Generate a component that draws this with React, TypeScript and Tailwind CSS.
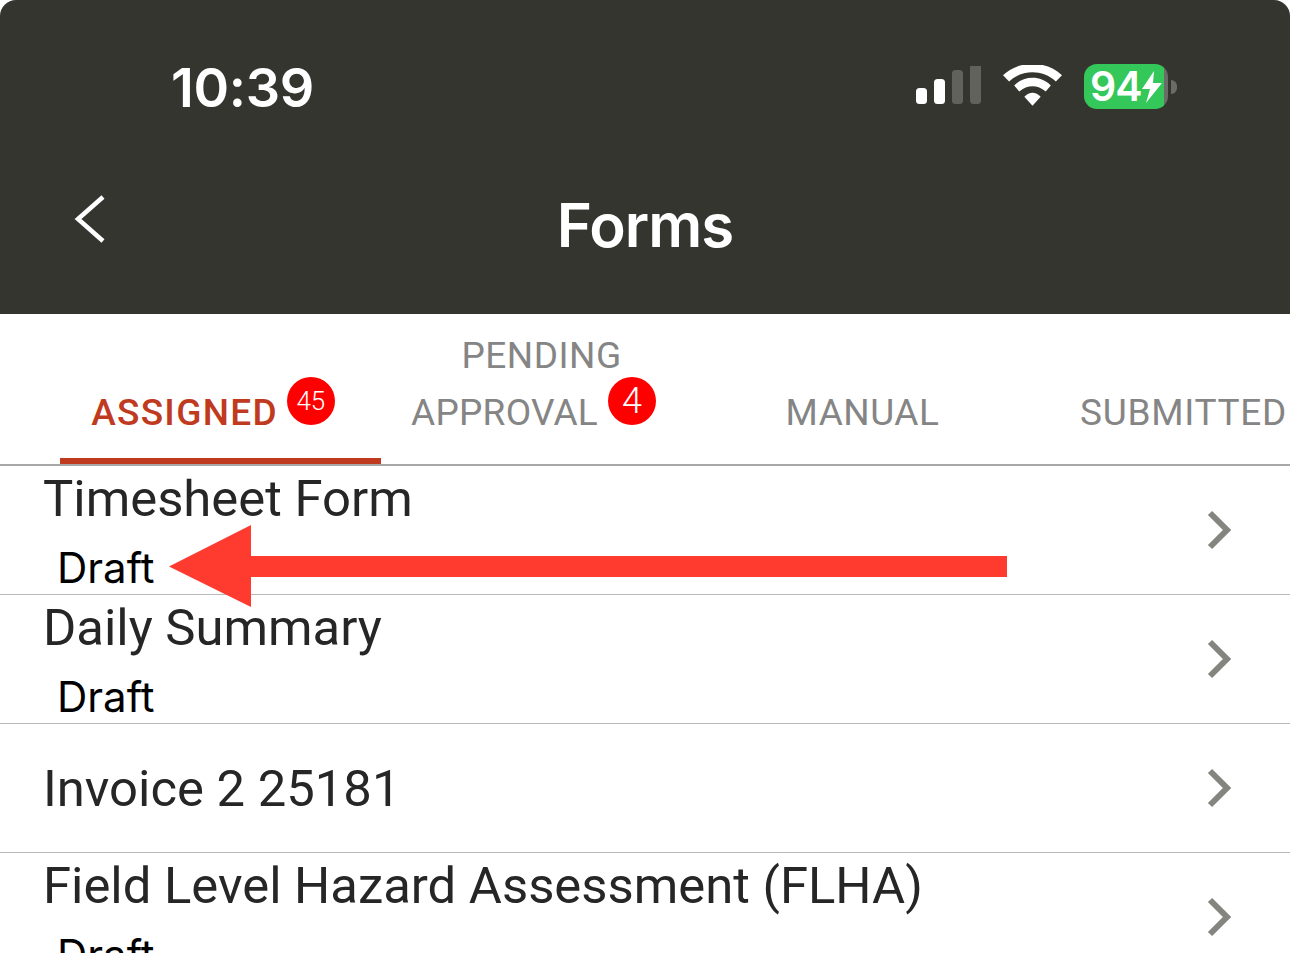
const rows = [
  { title: "Timesheet Form", draft: true },
  { title: "Daily Summary", draft: true },
  { title: "Invoice 2 25181", draft: false },
  { title: "Field Level Hazard Assessment (FLHA)", draft: true },
];

function Badge({ count, big }: { count: number; big?: boolean }) {
  return (
    <span
      className={`mt-[4px] flex h-[48px] w-[48px] shrink-0 items-center justify-center rounded-full bg-[#ff0000] font-light tracking-normal text-white ${
        big ? "text-[36px]" : "text-[26px]"
      }`}
    >
      {count}
    </span>
  );
}

function StatusBar() {
  return (
    <div className="flex h-[174px] items-start justify-between pl-[171px] pr-[113px] pt-[58px]">
      <span className="font-['Inter',sans-serif] text-[54px] font-semibold leading-[60px] tracking-[-0.3px] text-white">10:39</span>
      <div className="flex items-center pt-[6px]">
        <svg width="66" height="42" viewBox="0 0 66 42" className="mr-[20px]">
          <rect x="0" y="22" width="11" height="16" rx="3.5" fill="#fff" />
          <rect x="18" y="13" width="11" height="25" rx="3.5" fill="#fff" />
          <rect x="36" y="4" width="11" height="34" rx="3.5" fill="#62625d" />
          <rect x="54" y="-5" width="11" height="43" rx="3.5" fill="#62625d" />
        </svg>
        <svg width="61" height="43" viewBox="0 0 60 42" className="mr-[21px]">
          <path d="M1 10 C16 -5 44 -5 59 10 L53 16 C40 4 20 4 7 16 Z" fill="#fff" />
          <path d="M12 20 C22 10 38 10 48 20 L43 26 C35 19 25 19 17 26 Z" fill="#fff" />
          <path d="M22 31 C27 26 33 26 38 31 L30 40 Z" fill="#fff" />
        </svg>
        <div className="flex items-center">
          <div className="flex h-[45px] w-[84px] items-center rounded-[13px] bg-[linear-gradient(90deg,#34c759_95%,#6b6b67_95%)] pl-[6px] font-['Inter',sans-serif] text-[41px] font-semibold leading-none tracking-[-1px] text-white">
            94
            <svg width="22" height="32" viewBox="0 0 22 32" className="-ml-[1px]">
              <path d="M13 0 L1 18 H9 L5 32 L21 12 H12 Z" fill="#fff" />
            </svg>
          </div>
          <div className="ml-[3px] h-[14px] w-[6px] rounded-r-full bg-[#6b6b67]" />
        </div>
      </div>
    </div>
  );
}

function NavBar() {
  return (
    <div className="relative flex h-[140px] justify-center pt-[18px]">
      <svg width="36" height="50" viewBox="0 0 36 50" className="absolute left-[72px] top-[20px]">
        <path d="M31 3 L6 25 L31 47" fill="none" stroke="#fff" strokeWidth="4.5" />
      </svg>
      <span className="font-['Inter',sans-serif] text-[60px] font-semibold leading-[66px] tracking-[-1px] text-white">Forms</span>
    </div>
  );
}

function Tabs() {
  return (
    <div className="flex h-[152px] overflow-hidden border-b-[2px] border-[#a8a8a8] pl-[60px] font-['Roboto',sans-serif] text-[37px] leading-[56px] tracking-[0.5px] text-[#858585]">
      <div className="flex w-[321px] shrink-0 flex-col items-center justify-end border-b-[6px] border-[#bf3a1e] pb-[17px] text-[#bf3a1e]">
        <div className="flex items-start pr-[15px]">
          <span className="mt-[12px] font-medium tracking-[1.3px]">ASSIGNED</span>
          <span className="ml-[9px]"><Badge count={45} /></span>
        </div>
      </div>
      <div className="flex w-[321px] shrink-0 flex-col items-center justify-end pb-[23px]">
        <span>PENDING</span>
        <div className="-mt-[11px] flex items-start pr-[16px]">
          <span className="mt-[12px] tracking-[0.25px]">APPROVAL</span>
          <span className="ml-[10px]"><Badge count={4} big /></span>
        </div>
      </div>
      <div className="flex w-[321px] shrink-0 items-end justify-center pb-[23px]">MANUAL</div>
      <div className="flex w-[321px] shrink-0 items-end justify-center pb-[23px] tracking-[0.7px]">SUBMITTED</div>
    </div>
  );
}

function Row({ title, draft }: { title: string; draft: boolean }) {
  return (
    <div className="flex h-[129px] shrink-0 items-center justify-between border-b border-[#b9b9b9] pl-[43px] pr-[58px]">
      <div className={`flex flex-col ${draft ? "mb-[1px]" : "pt-[2px]"}`}>
        <span className="font-['Roboto',sans-serif] text-[50.8px] leading-[64px] text-[#262626]">{title}</span>
        {draft && (
          <span className="mt-[12px] pl-[14px] font-['Inter',sans-serif] text-[42px] leading-[50px] text-black">Draft</span>
        )}
      </div>
      <svg width="26" height="40" viewBox="0 0 26 40">
        <path d="M4 3 L21 20 L4 37" fill="none" stroke="#85857f" strokeWidth="6" />
      </svg>
    </div>
  );
}

export default function App() {
  return (
    <div className="relative h-[953px] w-[1290px] overflow-hidden bg-white">
      <div className="h-[314px] rounded-t-[16px] bg-[#353530]">
        <StatusBar />
        <NavBar />
      </div>
      <Tabs />
      <div className="flex flex-col">
        {rows.map((r) => (
          <Row key={r.title} title={r.title} draft={r.draft} />
        ))}
      </div>
      {/* red annotation arrow */}
      <svg width="840" height="84" viewBox="0 0 840 84" className="absolute left-[169px] top-[525px]">
        <path d="M0 41.5 L82 0 V31 H838 V52 H82 V82 Z" fill="#ff3b30" />
      </svg>
    </div>
  );
}
